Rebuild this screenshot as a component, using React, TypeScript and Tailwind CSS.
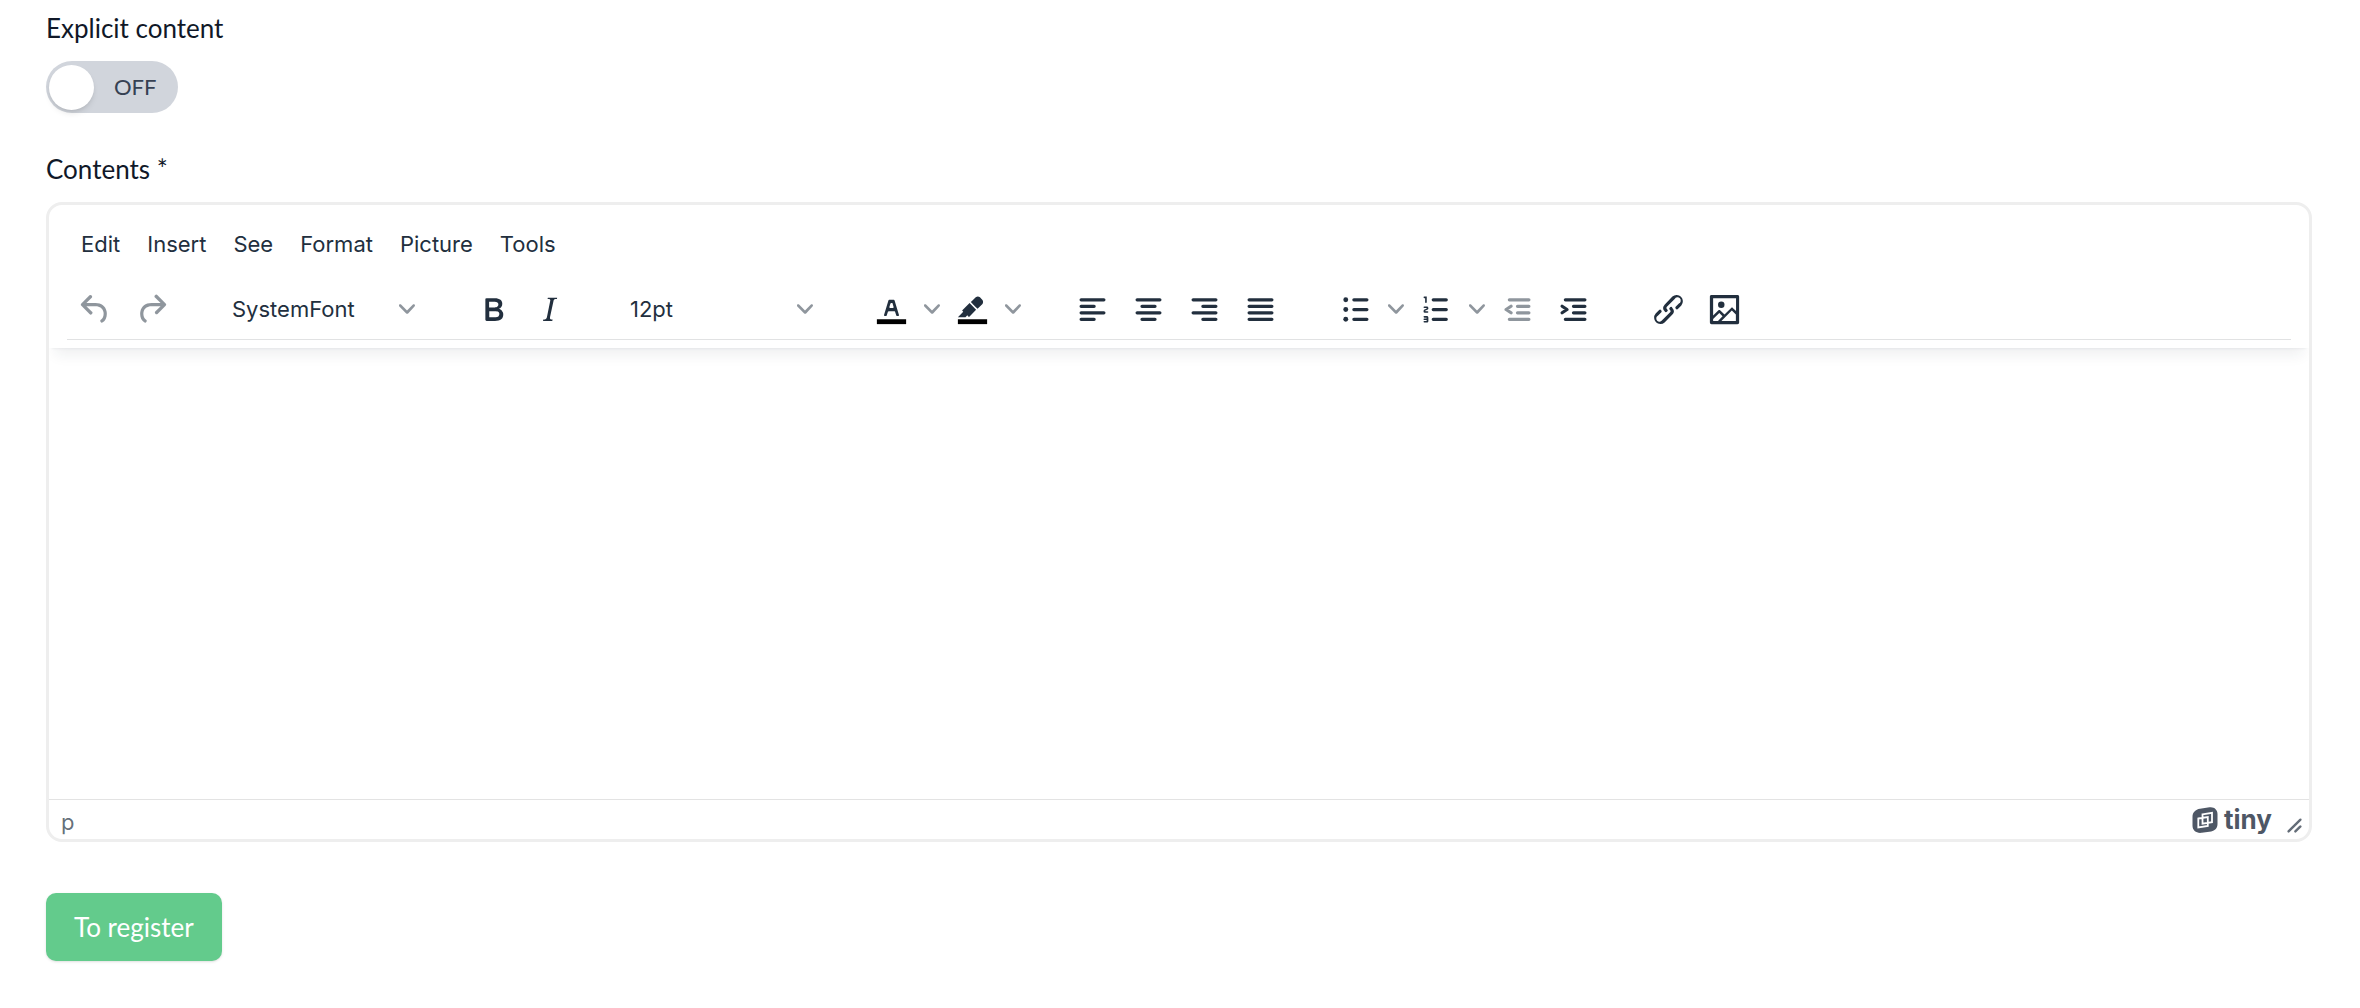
import type { ReactNode } from "react";

function Icon({ children }: { children: ReactNode }) {
  return (
    <svg viewBox="0 0 24 24" className="size-[39px] fill-current" fillRule="evenodd">
      {children}
    </svg>
  );
}

// rounded horizontal / angled bars, used by the align and list icons
function Strokes({ d }: { d: string }) {
  return <path d={d} fill="none" stroke="currentColor" strokeWidth="2" strokeLinecap="round" strokeLinejoin="round" />;
}

function Chevron() {
  return (
    <svg viewBox="0 0 10 10" className="size-4 fill-current opacity-50">
      <path d="M8.7 2.2c.3-.3.8-.3 1 0 .4.4.4.9 0 1.2L5.7 7.8c-.3.3-.9.3-1.2 0L.2 3.4a.8.8 0 0 1 0-1.2c.3-.3.8-.3 1.1 0L5 6l3.7-3.8Z" />
    </svg>
  );
}

function ToolButton({ label, disabled, children }: { label: string; disabled?: boolean; children: ReactNode }) {
  return (
    <button
      type="button"
      aria-label={label}
      disabled={disabled}
      className="flex h-14 w-14 items-center justify-center disabled:opacity-50"
    >
      <Icon>{children}</Icon>
    </button>
  );
}

function SplitButton({ label, children }: { label: string; children: ReactNode }) {
  return (
    <div className="flex">
      <ToolButton label={label}>{children}</ToolButton>
      <button type="button" aria-label={`${label} menu`} className="flex h-14 w-[25px] items-center justify-center">
        <Chevron />
      </button>
    </div>
  );
}

function ToolSelect({ label, value }: { label: string; value: string }) {
  return (
    <div className="relative h-14 w-52">
      <select aria-label={label} className="h-full w-full appearance-none bg-transparent pl-3.5 pr-10">
        <option>{value}</option>
      </select>
      <span className="pointer-events-none absolute inset-y-0 right-[11px] flex items-center">
        <Chevron />
      </span>
    </div>
  );
}

const menus = ["Edit", "Insert", "See", "Format", "Picture", "Tools"];

function Toolbar() {
  return (
    <div className="mx-[18px] mt-[3px] flex h-[59px] gap-[39px] border-b border-[#e1e2e3]">
      <div className="flex">
        <ToolButton label="Undo" disabled>
          <path d="M6.4 8H12c3.7 0 6.2 2 6.8 5.1.6 2.7-.4 5.6-2.3 6.8a1 1 0 0 1-1-1.8c1.1-.6 1.8-2.7 1.4-4.6-.5-2.1-2.1-3.5-4.9-3.5H6.4l3.3 3.3a1 1 0 1 1-1.4 1.4l-5-5a1 1 0 0 1 0-1.4l5-5a1 1 0 0 1 1.4 1.4L6.4 8z" />
        </ToolButton>
        <ToolButton label="Redo" disabled>
          <path d="M17.6 10H12c-2.8 0-4.4 1.4-4.9 3.5-.4 2 .3 4 1.4 4.6a1 1 0 1 1-1 1.8c-2-1.2-2.9-4.1-2.3-6.8.6-3 3-5.1 6.8-5.1h5.6l-3.3-3.3a1 1 0 1 1 1.4-1.4l5 5a1 1 0 0 1 0 1.4l-5 5a1 1 0 0 1-1.4-1.4l3.3-3.3z" />
        </ToolButton>
      </div>
      <ToolSelect label="Font" value="SystemFont" />
      <div className="flex">
        <ToolButton label="Bold">
          <path d="M7.8 19c-.3 0-.5 0-.6-.2l-.2-.5V5.7c0-.2 0-.4.2-.5l.6-.2h5c1.5 0 2.7.3 3.5 1 .7.6 1.1 1.4 1.1 2.5a3 3 0 0 1-.6 1.9c-.4.6-1 1-1.6 1.2.4.1.9.3 1.3.6s.8.7 1 1.2c.4.4.5 1 .5 1.6 0 1.3-.4 2.3-1.3 3-.8.7-2.1 1-3.8 1H7.8Zm5-8.3c.6 0 1.2-.1 1.6-.5.4-.3.6-.7.6-1.3 0-1.1-.8-1.7-2.3-1.7H9.3v3.5h3.4Zm.5 6c.7 0 1.3-.1 1.7-.4.4-.4.6-.9.6-1.5s-.2-1-.7-1.4c-.4-.3-1-.4-2-.4H9.4v3.8h4Z" />
        </ToolButton>
        <ToolButton label="Italic">
          <path d="m16.7 4.7-.1.9h-.3c-.6 0-1 0-1.4.3-.3.3-.4.6-.5 1.1l-2.1 9.8v.6c0 .5.4.8 1.4.8h.2l-.2.8H8l.2-.8h.2c1.1 0 1.8-.5 2-1.5l2-9.8.1-.5c0-.6-.4-.8-1.4-.8h-.3l.2-.9h5.8Z" />
        </ToolButton>
      </div>
      <ToolSelect label="Font size" value="12pt" />
      <div className="flex">
        <SplitButton label="Text color">
          <path d="M3 18h18v3H3z" fill="#000" />
          <path d="M8.7 16h-.8a.5.5 0 0 1-.5-.6l2.7-9c.1-.3.3-.4.5-.4h2.8c.2 0 .4.1.5.4l2.7 9a.5.5 0 0 1-.5.6h-.8a.5.5 0 0 1-.4-.4l-.7-2.2c0-.3-.3-.4-.5-.4h-3.4c-.2 0-.4.1-.5.4l-.7 2.2c0 .3-.2.4-.4.4Zm2.6-7.6-.6 2a.5.5 0 0 0 .5.6h1.6a.5.5 0 0 0 .5-.6l-.6-2c0-.3-.3-.4-.5-.4h-.4c-.2 0-.4.1-.5.4Z" />
        </SplitButton>
        <SplitButton label="Background color">
          <path d="M3 18h18v3H3z" fill="#000" />
          <path d="M7.7 16.7H3l3.3-3.3-.7-.8L10.2 8l4 4.1-4 4.2c-.2.2-.6.2-.8 0l-.6-.7-1.1 1.1zm5-7.5L11 7.4l3-2.9a2 2 0 0 1 2.6 0L18 6c.7.7.7 2 0 2.7l-2.9 2.9-1.8-1.8-.5-.6" />
        </SplitButton>
      </div>
      <div className="flex">
        <ToolButton label="Align left">
          <Strokes d="M5 6h14M5 10h8M5 14h14M5 18h8" />
        </ToolButton>
        <ToolButton label="Align center">
          <Strokes d="M5 6h14M8 10h8M5 14h14M8 18h8" />
        </ToolButton>
        <ToolButton label="Align right">
          <Strokes d="M5 6h14M11 10h8M5 14h14M11 18h8" />
        </ToolButton>
        <ToolButton label="Justify">
          <Strokes d="M5 6h14M5 10h14M5 14h14M5 18h14" />
        </ToolButton>
      </div>
      <div className="flex">
        <SplitButton label="Bullet list">
          <Strokes d="M11 6h8M11 12h8M11 18h8" />
          <circle cx="6" cy="6" r="1.5" />
          <circle cx="6" cy="12" r="1.5" />
          <circle cx="6" cy="18" r="1.5" />
        </SplitButton>
        <SplitButton label="Numbered list">
          <Strokes d="M10 6h8M10 12h8M10 18h8" />
          <path d="M6 4v3.5c0 .3-.2.5-.5.5a.5.5 0 0 1-.5-.5V5h-.5a.5.5 0 0 1 0-1H6zm-1 8.8.2.2h1.3c.3 0 .5.2.5.5s-.2.5-.5.5H4.9a1 1 0 0 1-.9-1V13c0-.4.3-.8.6-1l1.2-.4.2-.3a.2.2 0 0 0-.2-.2H4.5a.5.5 0 0 1-.5-.5c0-.3.2-.5.5-.5h1.6c.5 0 .9.4.9 1v.1c0 .4-.3.8-.6 1l-1.2.4-.2.3zM7 17v2c0 .6-.4 1-1 1H4.5a.5.5 0 0 1 0-1h1.2c.2 0 .3-.1.3-.3 0-.2-.1-.3-.3-.3H4.4a.4.4 0 1 1 0-.8h1.3c.2 0 .3-.1.3-.3 0-.2-.1-.3-.3-.3H4.5a.5.5 0 1 1 0-1H6c.6 0 1 .4 1 1z" />
        </SplitButton>
        <ToolButton label="Decrease indent" disabled>
          <Strokes d="M7 6h12M12 10h7M12 14h7M7 18h12M8 10l-3 2 3 2" />
        </ToolButton>
        <ToolButton label="Increase indent">
          <Strokes d="M7 6h12M12 10h7M12 14h7M7 18h12M5 10l3 2-3 2" />
        </ToolButton>
      </div>
      <div className="flex">
        <ToolButton label="Link">
          <path d="M6.2 12.3a1 1 0 0 1 1.4 1.4l-2 2a2 2 0 1 0 2.6 2.8l4.8-4.8a1 1 0 0 0 0-1.4 1 1 0 1 1 1.4-1.3 2.9 2.9 0 0 1 0 4L9.6 20a3.9 3.9 0 0 1-5.5-5.5l2-2zm11.6-.6a1 1 0 0 1-1.4-1.4l2-2a2 2 0 1 0-2.6-2.8L11 10.3a1 1 0 0 0 0 1.4A1 1 0 1 1 9.6 13a2.9 2.9 0 0 1 0-4L14.4 4a3.9 3.9 0 0 1 5.5 5.5l-2 2z" />
        </ToolButton>
        <ToolButton label="Image">
          <path d="m5 15.7 3.3-3.2c.3-.3.7-.3 1 0L12 15l4.1-4c.3-.4.8-.4 1 0l2 1.9V5H5v10.7zM5 18v1h3l2.8-2.9-2-2L5 17.9zm14-3-2.5-2.4-6.4 6.5H19v-4zM4 3h16c.6 0 1 .4 1 1v16c0 .6-.4 1-1 1H4a1 1 0 0 1-1-1V4c0-.6.4-1 1-1z" />
          <circle cx="10" cy="9" r="2" />
        </ToolButton>
      </div>
    </div>
  );
}

function Editor() {
  return (
    <div className="mt-[17px] overflow-hidden rounded-2xl border-[3px] border-[#eee] font-['Inter',sans-serif] text-[22px] leading-8 text-[#222f3e]">
      <div className="relative h-[143px] pt-[5px] shadow-[0_3px_3px_-3px_rgba(34,47,62,0.1),0_13px_13px_-6px_rgba(34,47,62,0.07)]">
        <div className="flex h-[68px] items-center gap-px pl-[19px]">
          {menus.map((menu) => (
            <button key={menu} type="button" className="px-[13px]">
              {menu}
            </button>
          ))}
        </div>
        <Toolbar />
      </div>
      <textarea id="contents" className="block h-[451px] w-full resize-none p-4 outline-none" />
      <div className="flex h-10 items-center justify-between border-t border-[#e3e3e3] pl-3 pr-1.5 text-[#222f3e]/70">
        <span className="pt-1">p</span>
        <div className="flex items-center">
          <a href="#" className="flex items-center gap-1.5 text-[26px] font-bold leading-8 text-[#4e5765]">
            <svg viewBox="0 0 26 26" className="size-[26px]">
              <path
                d="M8 1.800 17.500.3C22-.4 25.500 2.600 25.500 7v10c0 4-2.500 6.800-6.300 7.400l-9.500 1.400C4.500 26.500.5 23.500.5 18.800V10C.5 5.500 3.500 2.500 8 1.800Z"
                fill="currentColor"
              />
              <path
                d="M10.500 7.300 20 5.800v9.400l-9.500 1.500V7.300ZM6.300 11.500l9.500-1.500v8.900l-9.500 1.500v-8.900Z"
                fill="none"
                stroke="#fff"
                strokeWidth="1.800"
              />
            </svg>
            <span>tiny</span>
          </a>
          <svg viewBox="0 0 10 10" className="ml-3.5 mt-3 size-[17px] fill-current">
            <path d="M8.1 1.1A.5.5 0 1 1 9 2l-7 7A.5.5 0 1 1 1 8l7-7ZM8.1 5.1A.5.5 0 1 1 9 6l-3 3A.5.5 0 1 1 5 8l3-3Z" />
          </svg>
        </div>
      </div>
    </div>
  );
}

export default function App() {
  return (
    <form className="bg-white pb-12 pl-[46px] pr-12 pt-3 font-['Lato',sans-serif] text-[26px] leading-8 text-gray-900">
      <label htmlFor="explicit" className="block">
        Explicit content
      </label>
      <label className="relative mt-[17px] flex h-[52px] w-[132px] cursor-pointer items-center rounded-full bg-gray-300 px-[3px]">
        <input id="explicit" type="checkbox" className="peer absolute inset-0 cursor-pointer opacity-0" />
        <span className="size-[45px] rounded-full bg-white shadow-md" />
        <span className="ml-5 text-[22px] text-gray-700">OFF</span>
      </label>
      <label htmlFor="contents" className="mt-10 block">
        Contents *
      </label>
      <Editor />
      <button
        type="submit"
        className="mt-[51px] h-[68px] rounded-[10px] bg-[#63cb8c] px-7 text-white shadow-sm"
      >
        To register
      </button>
    </form>
  );
}
